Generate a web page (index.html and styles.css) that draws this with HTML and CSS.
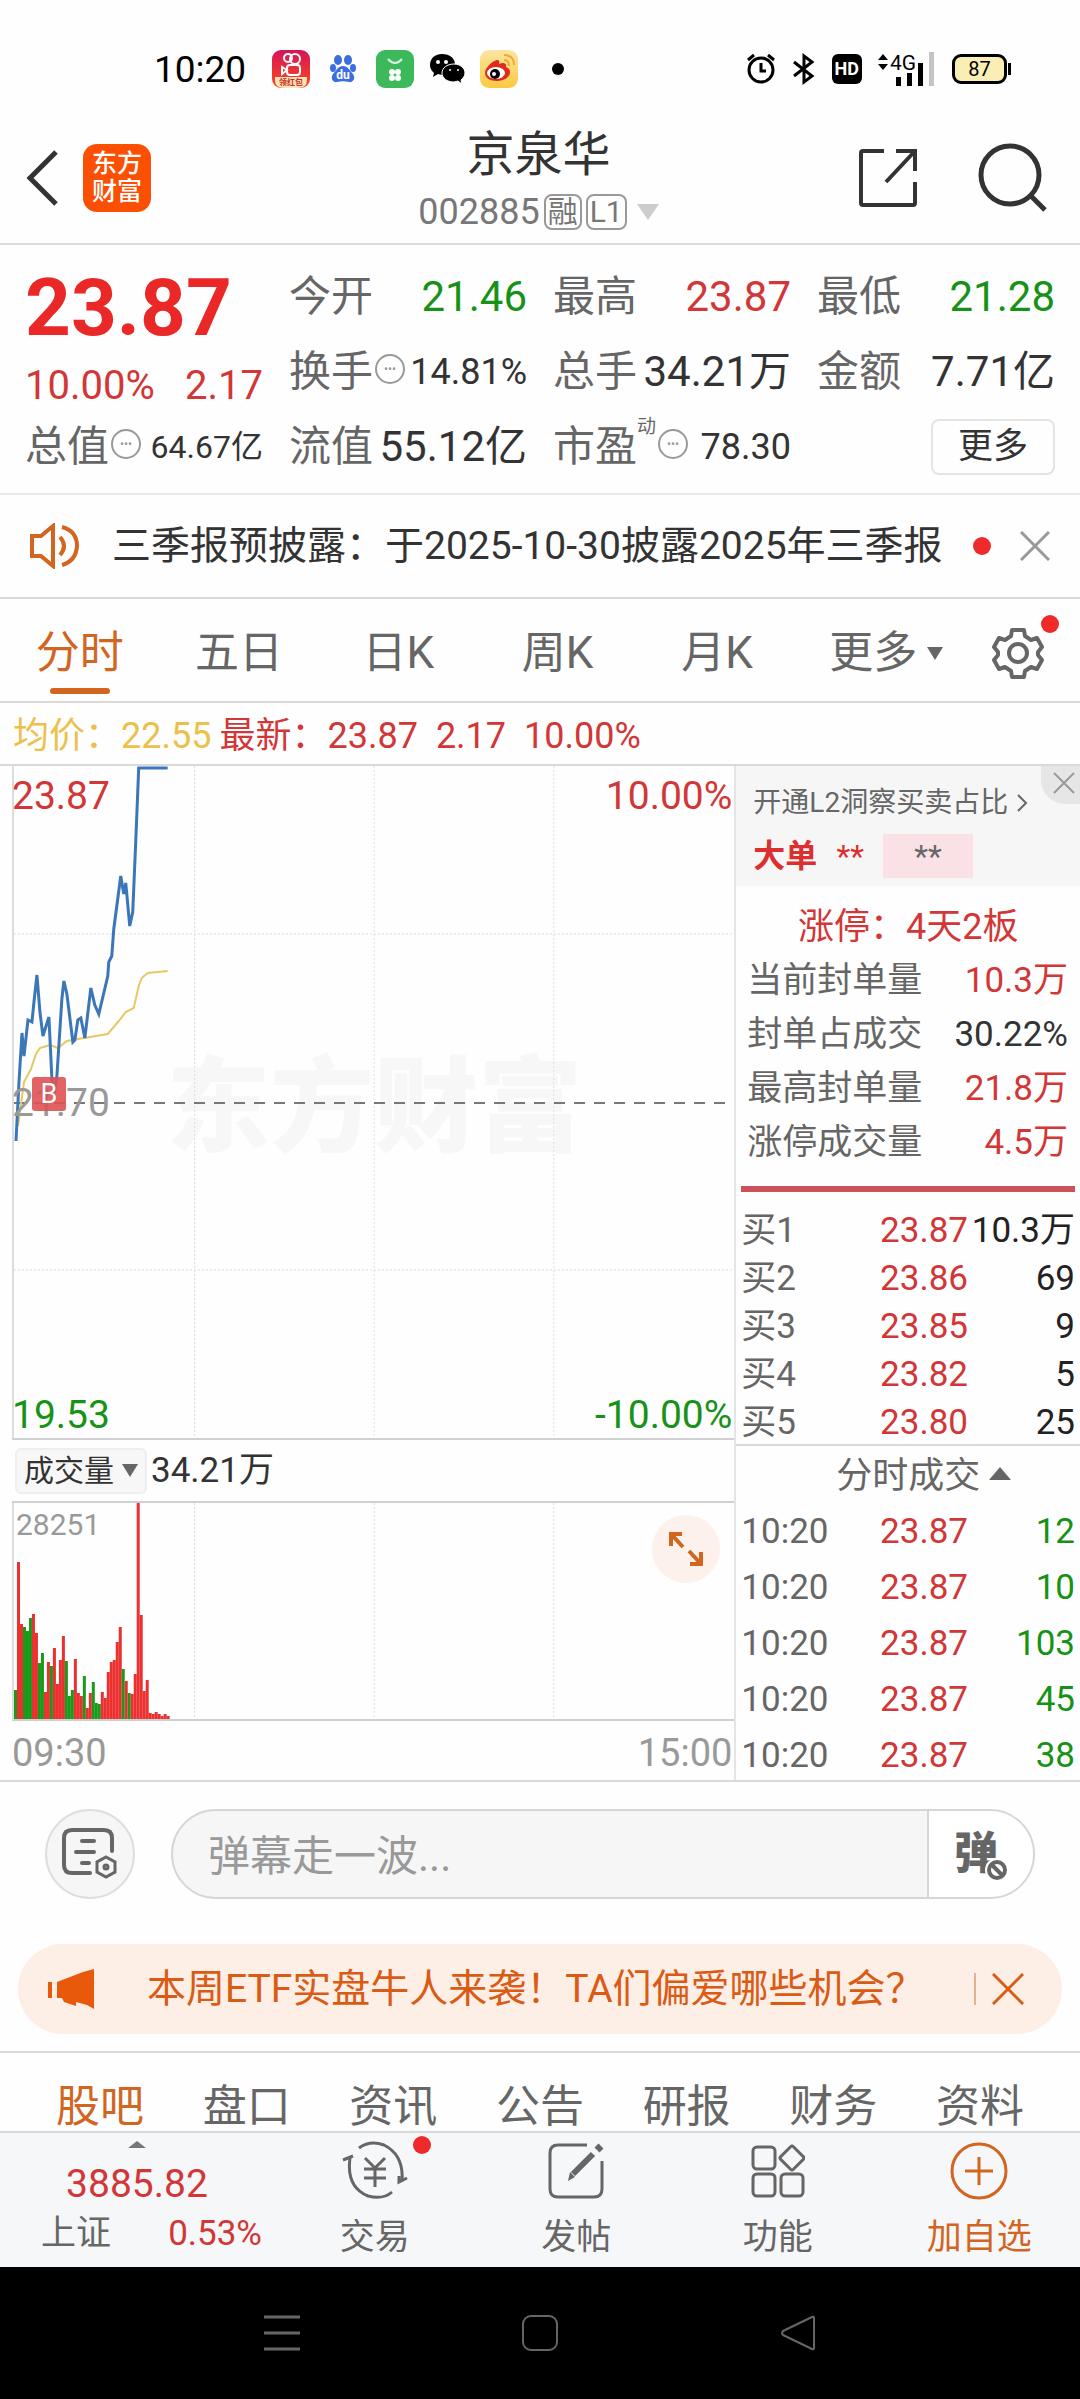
FILE: index.html
```html
<!DOCTYPE html>
<html lang="zh-CN">
<head>
    <meta charset="UTF-8">
    <meta name="viewport" content="width=device-width, initial-scale=1.0">
    <title>京泉华 002885</title>
    <link rel="stylesheet" href="styles.css">
</head>
<body>

    <div class="status-bar">
        <span class="clock">10:20</span>
        <div class="app-icons">
            <svg width="38" height="38" viewBox="0 0 38 38">
                <defs>
                    <linearGradient id="ks" x1="0" y1="0" x2="0" y2="1"><stop offset="0" stop-color="#d3145a"/><stop offset="1" stop-color="#ff4a1c"/></linearGradient>
                    <linearGradient id="wb" x1="0" y1="0" x2="0" y2="1"><stop offset="0" stop-color="#fbe6a0"/><stop offset="1" stop-color="#fbc93f"/></linearGradient>
                </defs>
                <rect width="38" height="38" rx="9" fill="url(#ks)"/>
                <path d="M3 27h32v3q0 8-9 8H12q-9 0-9-8z" fill="#fde3b8"/>
                <g fill="none" stroke="#fff" stroke-width="2"><circle cx="16" cy="8" r="4"/><circle cx="23" cy="9" r="5"/><rect x="15" y="15" width="13" height="10" rx="3"/><path d="M15 20l-5-3v7z"/></g>
                <text x="19" y="35" font-size="8" text-anchor="middle" fill="#c8321e" font-weight="700">领红包</text>
            </svg>
            <svg width="38" height="38" viewBox="0 0 38 38" fill="#3b6fe0">
                <ellipse cx="14" cy="10" rx="4" ry="5"/><ellipse cx="24" cy="10" rx="4" ry="5"/><ellipse cx="9" cy="18" rx="3" ry="4"/><ellipse cx="29" cy="18" rx="3" ry="4"/>
                <path d="M19 16c5 0 6 4 10 8 3 4 0 9-4 8-4-1-8-1-12 0-4 1-7-4-4-8 4-4 5-8 10-8z"/>
                <text x="19" y="29" font-size="12" text-anchor="middle" fill="#fff" font-weight="700">du</text>
            </svg>
            <svg width="38" height="38" viewBox="0 0 38 38">
                <rect width="38" height="38" rx="9" fill="#3cba5b"/>
                <path d="M12 9q7 8 14 0" fill="none" stroke="#d9f5df" stroke-width="2"/>
                <g fill="#fff"><circle cx="16" cy="22" r="3"/><circle cx="22" cy="22" r="3"/><circle cx="16" cy="28" r="3"/><circle cx="22" cy="28" r="3"/></g>
            </svg>
            <svg width="38" height="38" viewBox="0 0 38 38">
                <path d="M14 4C6 4 2 9 2 15c0 4 2 6 4 8l-1 4 5-3c10 3 17-2 17-9S22 4 14 4z"/>
                <path d="M26 14c-7 0-12 4-12 9s5 9 12 9l4-1 4 3-1-4c2-2 4-4 4-7 0-5-5-9-11-9z" stroke="#fff" stroke-width="1"/>
                <g fill="#fff"><circle cx="10" cy="12" r="2"/><circle cx="18" cy="12" r="2"/><circle cx="22" cy="20" r="1"/><circle cx="30" cy="20" r="1"/></g>
            </svg>
            <svg width="38" height="38" viewBox="0 0 38 38">
                <rect width="38" height="38" rx="9" fill="url(#wb)"/>
                <path d="M5 23c0-5 7-12 12-13 2 0 3 1 2 4 4-2 8-1 7 3 3 1 4 3 4 5 0 5-6 9-13 9S5 28 5 23z" fill="#df2b1e"/>
                <ellipse cx="16" cy="23" rx="9" ry="6" fill="#fff"/><circle cx="15" cy="24" r="5"/><circle cx="14" cy="24" r="2" fill="#fff"/>
                <path d="M24 10q5 0 5 6M24 5q10 0 10 10" fill="none" stroke="#f0a83a" stroke-width="2"/>
            </svg>
            <span class="more-dot"></span>
        </div>
        <div class="sys-icons">
            <svg width="30" height="34" viewBox="0 0 30 34" fill="none" stroke="#000" stroke-width="3"><circle cx="15" cy="18" r="12"/><path d="M15 11v8h5M2 8l6-5M28 8l-6-5"/></svg>
            <svg width="24" height="34" viewBox="0 0 24 34" fill="none" stroke="#000" stroke-width="3"><path d="M2 10l18 14-8 6V4l8 6L2 24"/></svg>
            <span class="hd">HD</span>
            <svg width="58" height="38" viewBox="0 0 58 38"><path d="M5 4l5 6H0zM5 20l5-6H0z"/><text x="12" y="20" font-size="21">4G</text><path d="M18 27h5v9h-5zM29 23h5v13h-5zM40 13h5v23h-5z"/><path d="M51 2h5v34h-5z" fill="#c4c4c4"/></svg>
            <span class="battery">87</span>
        </div>
    </div>

    <header class="header">
        <div class="header-side">
            <button class="icon-button" aria-label="返回">
                <svg width="36" height="56" viewBox="0 0 36 56" fill="none" stroke="#333" stroke-width="5"><path d="M32 2L6 28l26 26"/></svg>
            </button>
            <div class="logo">东方<br>财富</div>
        </div>
        <div class="header-title">
            <h1>京泉华</h1>
            <div class="code">002885<span class="tag">融</span><span class="tag">L1</span><i class="down"></i></div>
        </div>
        <div class="header-side right">
            <button class="icon-button" aria-label="分享">
                <svg width="60" height="60" viewBox="0 0 60 60" fill="none" stroke="#333" stroke-width="4"><path d="M26 3H5q-2 0-2 2v50q0 2 2 2h50q2 0 2-2V34M38 3h19v20M57 3L28 34"/></svg>
            </button>
            <button class="icon-button" aria-label="搜索">
                <svg width="70" height="70" viewBox="0 0 70 70" fill="none" stroke="#333" stroke-width="5"><circle cx="32" cy="32" r="29"/><path d="M53 53l14 14"/></svg>
            </button>
        </div>
    </header>

    <section class="quote">
        <div class="price">
            <strong>23.87</strong>
            <div class="change"><span>10.00%</span><span>2.17</span></div>
        </div>
        <div class="cell"><span>今开</span><b class="green">21.46</b></div>
        <div class="cell"><span>最高</span><b class="red">23.87</b></div>
        <div class="cell"><span>最低</span><b class="green">21.28</b></div>
        <div class="cell"><span>换手</span><i class="info">•••</i><b class="medium">14.81%</b></div>
        <div class="cell"><span>总手</span><b>34.21万</b></div>
        <div class="cell"><span>金额</span><b>7.71亿</b></div>
        <div class="cell"><span>总值</span><i class="info">•••</i><b class="small">64.67亿</b></div>
        <div class="cell"><span>流值</span><b>55.12亿</b></div>
        <div class="cell"><span>市盈</span><sup>动</sup><i class="info">•••</i><b class="medium">78.30</b></div>
        <div class="cell"><button class="more-button">更多</button></div>
    </section>

    <section class="notice">
        <svg width="54" height="46" viewBox="0 0 54 46" fill="none" stroke="#d2651f" stroke-width="4"><path d="M4 13h9L25 3v40L13 33H4zM32 14q8 9 0 18M34 4q15 4 15 19-1 15-15 19"/></svg>
        <p>三季报预披露：于2025-10-30披露2025年三季报</p>
        <span class="red-dot"></span>
        <button class="icon-button" aria-label="关闭">
            <svg width="30" height="30" viewBox="0 0 30 30" fill="none" stroke="#999" stroke-width="3"><path d="M1 1l28 28M29 1L1 29"/></svg>
        </button>
    </section>

    <nav class="periods">
        <button class="active">分时</button>
        <button>五日</button>
        <button>日K</button>
        <button>周K</button>
        <button>月K</button>
        <button>更多<i class="down"></i></button>
        <button class="settings" aria-label="设置">
            <svg width="52" height="52" viewBox="0 0 52 52" fill="none" stroke="#666" stroke-width="4" stroke-linejoin="round"><path d="M20 3h12l1 6 6 4 6-2 5 9-4 5v3l4 5-5 9-6-2-6 4-1 6H20l-1-6-6-4-6 2-5-9 4-5v-3l-4-5 5-9 6 2 6-4z"/><circle cx="26" cy="26" r="9"/></svg>
            <span class="red-dot"></span>
        </button>
    </nav>

    <div class="average"><span class="yellow">均价：22.55</span><span>最新：23.87</span><span>2.17</span><span>10.00%</span></div>

    <main class="market">
        <div class="charts">
            <div class="chart price-chart">
                <div class="watermark">东方财富</div>
                <svg class="plot" viewBox="0 0 722 672" preserveAspectRatio="none">
                    <path class="grid" d="M181 0v672M361 0v672M541 0v672M0 168h722M0 504h722"/>
                    <path class="middle" d="M0 337h722"/>
                    <path class="avg-line" d="M4 360L10 316 17 303 22 288 26 282 36 279 44 282 53 275 70 272 94 268 105 255 112 246 120 242 125 220 128 212 134 207 154 205"/>
                    <path class="price-line" d="M2 375L5 316 8 267 10 290 14 254 18 256 20 236 23 209 26 246 29 270 35 251 38 313 40 330 43 310 48 233 50 215 53 228 59 276 61 274 64 254 67 252 71 272 77 222 81 239 85 248 94 210 95 196 98 190 100 163 107 110 110 128 112 117 116 160 119 146 122 76 125 2 154 2"/>
                </svg>
                <span class="axis top red">23.87</span>
                <span class="axis top end red">10.00%</span>
                <span class="axis mid">21.70</span>
                <span class="axis bottom green">19.53</span>
                <span class="axis bottom end green">-10.00%</span>
                <span class="buy-mark">B</span>
            </div>
            <div class="volume-head">
                <div class="picker">
                    <select aria-label="指标"><option>成交量</option></select>
                    <i class="down"></i>
                </div>
                <span>34.21万</span>
            </div>
            <div class="chart volume-chart">
                <svg class="plot" viewBox="0 0 722 216" preserveAspectRatio="none">
                    <path class="grid" d="M181 0v216M361 0v216M541 0v216"/>
                    <g id="bars"></g>
                </svg>
                <span class="volume-max">28251</span>
                <button class="expand" aria-label="全屏">
                    <svg width="36" height="36" viewBox="0 0 36 36" fill="none" stroke="#d2651f" stroke-width="4"><path d="M3 15V3h11M3 3l12 13M33 21v12H22M33 33L21 20"/></svg>
                </button>
            </div>
            <div class="times"><span>09:30</span><span>15:00</span></div>
        </div>

        <aside class="depth">
            <div class="level2">
                <a href="#">开通L2洞察买卖占比<svg width="12" height="20" viewBox="0 0 12 20" fill="none" stroke="#666" stroke-width="2"><path d="M2 2l8 8-8 8"/></svg></a>
                <div class="big-order"><b>大单</b><span>**</span><em>**</em></div>
                <button class="close-tab" aria-label="关闭">
                    <svg width="22" height="22" viewBox="0 0 22 22" fill="none" stroke="#999" stroke-width="2"><path d="M1 1l20 20M21 1L1 21"/></svg>
                </button>
            </div>
            <div class="limit-title">涨停：4天2板</div>
            <dl class="limit">
                <div><dt>当前封单量</dt><dd class="red">10.3万</dd></div>
                <div><dt>封单占成交</dt><dd>30.22%</dd></div>
                <div><dt>最高封单量</dt><dd class="red">21.8万</dd></div>
                <div><dt>涨停成交量</dt><dd class="red">4.5万</dd></div>
            </dl>
            <table class="orders">
                <tr><th>买1</th><td>23.87</td><td>10.3万</td></tr>
                <tr><th>买2</th><td>23.86</td><td>69</td></tr>
                <tr><th>买3</th><td>23.85</td><td>9</td></tr>
                <tr><th>买4</th><td>23.82</td><td>5</td></tr>
                <tr><th>买5</th><td>23.80</td><td>25</td></tr>
            </table>
            <button class="deals-title">分时成交<i class="up"></i></button>
            <table class="orders deals">
                <tr><th>10:20</th><td>23.87</td><td>12</td></tr>
                <tr><th>10:20</th><td>23.87</td><td>10</td></tr>
                <tr><th>10:20</th><td>23.87</td><td>103</td></tr>
                <tr><th>10:20</th><td>23.87</td><td>45</td></tr>
                <tr><th>10:20</th><td>23.87</td><td>38</td></tr>
            </table>
        </aside>
    </main>

    <section class="barrage">
        <button class="round" aria-label="弹幕设置">
            <svg width="56" height="52" viewBox="0 0 56 52" fill="none" stroke="#666" stroke-width="4" stroke-linecap="round"><path d="M28 45H10q-8 0-8-8V10q0-8 8-8h32q8 0 8 8v13M20 13h12M14 24h18M20 35h7"/><path d="M44 29l9 5v10l-9 5-9-5V34z" stroke-width="3"/><circle cx="44" cy="39" r="2" stroke-width="3"/></svg>
        </button>
        <div class="barrage-box">
            <input type="text" aria-label="弹幕" placeholder="弹幕走一波...">
            <button aria-label="关闭弹幕">弹<svg width="24" height="24" viewBox="0 0 24 24" fill="#fff"><circle cx="12" cy="12" r="12"/><circle cx="12" cy="12" r="8" stroke="#666" stroke-width="4"/><path d="M7 7l10 10" stroke="#666" stroke-width="4"/></svg></button>
        </div>
    </section>

    <section class="banner">
        <svg width="46" height="40" viewBox="0 0 46 40" fill="#e8590c"><path d="M0 13h4v16H0zM9 13L35 3 46 0v40l-7-4-11-3v4l-12-4-2-4H9z"/></svg>
        <a href="#">本周ETF实盘牛人来袭！TA们偏爱哪些机会？</a>
        <button class="icon-button" aria-label="关闭">
            <svg width="32" height="32" viewBox="0 0 32 32" fill="none" stroke="#d95b14" stroke-width="3"><path d="M1 1l30 30M31 1L1 31"/></svg>
        </button>
    </section>

    <nav class="sections">
        <a class="active" href="#">股吧</a>
        <a href="#">盘口</a>
        <a href="#">资讯</a>
        <a href="#">公告</a>
        <a href="#">研报</a>
        <a href="#">财务</a>
        <a href="#">资料</a>
    </nav>

    <footer class="toolbar">
        <div class="index">
            <i class="up"></i>
            <span class="red">3885.82</span>
            <div><span>上证</span><span class="red">0.53%</span></div>
        </div>
        <button>
            <svg width="66" height="60" viewBox="0 0 66 60" fill="none" stroke="#666" stroke-width="3"><path d="M17 7q11-8 25-3 20 10 18 36M50 51q-9 8-24 4Q4 46 8 17M1 19l10-4M65 37l-8 4V35M23 17l10 10 10-10M22 28h22M22 37h22M33 27v19"/></svg>
            <span>交易</span>
            <span class="red-dot"></span>
        </button>
        <button>
            <svg width="56" height="60" viewBox="0 -2 56 60" fill="none" stroke="#666" stroke-width="3"><path d="M39 2H10q-8 0-8 8v36q0 8 8 8h36q8 0 8-8V18"/><path d="M45 11L25 31" stroke-width="6"/><path d="M22 29l5 5-7 4z" fill="#666" stroke="none"/><path d="M49 7l4-4" stroke-width="7"/></svg>
            <span>发帖</span>
        </button>
        <button>
            <svg width="54" height="60" viewBox="0 -3 54 60" fill="none" stroke="#666" stroke-width="3"><rect x="2" y="3" width="22" height="22" rx="4"/><rect x="2" y="30" width="22" height="22" rx="4"/><rect x="30" y="30" width="22" height="22" rx="4"/><rect x="32" y="5" width="18" height="18" rx="2" transform="rotate(45 41 14)"/></svg>
            <span>功能</span>
        </button>
        <button class="active">
            <svg width="58" height="60" viewBox="0 -1 58 60" fill="none" stroke="#d2651f" stroke-width="3"><circle cx="29" cy="29" r="27"/><path d="M29 15v28M15 29h28"/></svg>
            <span>加自选</span>
        </button>
    </footer>

    <div class="system-nav">
        <svg width="36" height="36" viewBox="0 0 36 36" fill="none" stroke="#666" stroke-width="3"><path d="M0 2h36M0 18h36M0 34h36"/></svg>
        <svg width="36" height="36" viewBox="0 0 36 36" fill="none" stroke="#666" stroke-width="2"><rect x="1" y="1" width="34" height="34" rx="8"/></svg>
        <svg width="36" height="36" viewBox="0 0 36 36" fill="none" stroke="#666" stroke-width="2" stroke-linejoin="round"><path d="M34 3v30q0 2-2 1L3 20q-2-2 0-4L32 2q2-1 2 1z"/></svg>
    </div>

    <script>
        // one bar per minute, negative = falling minute
        const volumes = [-29, 157, 95, -92, -88, -101, 105, 86, -56, -66, 27, 57, -53, 71, 35, 59, 83, -58,
            -23, -29, 60, 26, 23, -43, 11, 26, -37, -16, -15, 27, 21, 47, 57, 59, 77, 92, -50, 38, -26, 25,
            45, 216, 104, 28, 39, 6, 5, 7, 5, 3, 5, 3];

        document.getElementById('bars').innerHTML = volumes.map((v, i) =>
            `<rect x="${i * 3}" y="${216 - Math.abs(v)}" width="3" height="${Math.abs(v)}" fill="${v < 0 ? '#1a9a1a' : '#ec2f2f'}"/>`
        ).join('');
    </script>

</body>
</html>
```

FILE: styles.css
```css
* {
    margin: 0;
    padding: 0;
    box-sizing: border-box;
}

body {
    background: #fefefe;
    color: #333;
    font-family: Roboto, "Noto Sans CJK SC", sans-serif;
    font-size: 35px;
}

button, input, select {
    font: inherit;
    color: inherit;
    background: none;
    border: none;
}

a {
    color: inherit;
    text-decoration: none;
}

svg {
    display: block;
    flex: none;
}

i, em {
    font-style: normal;
}

.red { color: #d23636; }
.green { color: #169216; }
.yellow { color: #ebc04b; }

.down, .up {
    display: inline-block;
    border: 8px solid transparent;
}

.down {
    border-top: 13px solid #666;
    border-bottom: none;
}

.up {
    border-width: 11px;
    border-bottom: 13px solid #666;
    border-top: none;
}

.red-dot {
    width: 18px;
    height: 18px;
    border-radius: 50%;
    background: #ee2a2a;
}

.icon-button {
    display: flex;
}

/* status bar */
.status-bar {
    display: flex;
    align-items: center;
    height: 138px;
    padding: 0 73px 0 154px;
    color: #000;
}

.clock {
    font-size: 37px;
}

.app-icons {
    display: flex;
    align-items: center;
    gap: 14px;
    margin-left: 26px;
}

.more-dot {
    width: 12px;
    height: 12px;
    margin-left: 20px;
    border-radius: 50%;
    background: #000;
}

.sys-icons {
    display: flex;
    align-items: center;
    gap: 16px;
    margin-left: auto;
}

.hd {
    padding: 0 3px;
    border-radius: 6px;
    background: #000;
    color: #fff;
    font-size: 18px;
    font-weight: 700;
    line-height: 30px;
}

.battery {
    position: relative;
    width: 55px;
    border: 3px solid #000;
    border-radius: 9px;
    background: #fbeeb5;
    font-size: 20px;
    line-height: 24px;
    text-align: center;
}

.battery::after {
    content: "";
    position: absolute;
    top: 6px;
    right: -7px;
    width: 3px;
    height: 12px;
    background: #000;
}

/* header */
.header {
    display: flex;
    justify-content: space-between;
    height: 107px;
    padding: 0 32px 0 24px;
    border-bottom: 2px solid #dcdcdc;
}

.header-side {
    display: flex;
    align-items: center;
    gap: 23px;
    width: 195px;
    height: 80px;
}

.header-side.right {
    justify-content: flex-end;
    gap: 60px;
    width: 190px;
}

.logo {
    width: 68px;
    padding: 6px 0;
    border-radius: 14px;
    background: #fb4f04;
    color: #fff;
    font-size: 25px;
    font-weight: 500;
    line-height: 28px;
    text-align: center;
}

.header-title {
    text-align: center;
}

.header-title h1 {
    font-size: 48px;
    font-weight: 400;
    line-height: 34px;
}

.code {
    display: flex;
    align-items: center;
    gap: 4px;
    height: 80px;
    color: #777;
    font-size: 36px;
}

.tag {
    padding: 0 2px;
    border: 2px solid #999;
    border-radius: 8px;
    font-size: 30px;
    line-height: 32px;
}

.code .down {
    margin-left: 6px;
    border-width: 11px;
    border-top: 16px solid #ccc;
    border-bottom: none;
}

/* quote */
.quote {
    display: grid;
    grid-template-columns: repeat(4, 1fr);
    grid-auto-rows: 75px;
    column-gap: 26px;
    padding: 14px 25px 9px;
    border-bottom: 2px solid #e9e9e9;
}

.price {
    grid-row: span 2;
    color: #ea2828;
}

.price strong {
    display: block;
    font-size: 80px;
    font-weight: 700;
    line-height: 98px;
}

.change {
    display: flex;
    justify-content: space-between;
    color: #d23636;
    font-size: 40px;
    line-height: 58px;
}

.cell {
    display: flex;
    align-items: center;
    font-size: 42px;
    line-height: 76px;
    white-space: nowrap;
}

.cell span, .cell sup {
    color: #666;
}

.cell b {
    margin-left: auto;
    font-weight: 400;
}

.cell .medium { font-size: 36px; }
.cell .small { font-size: 32px; }

.cell sup {
    align-self: flex-start;
    font-size: 19px;
    line-height: 36px;
}

.info {
    width: 30px;
    margin: 0 0 6px 2px;
    border: 2px solid #999;
    border-radius: 50%;
    color: #999;
    font-size: 12px;
    line-height: 26px;
    text-align: center;
}

.more-button {
    margin-left: auto;
    padding: 0 25px;
    border: 2px solid #e4e4e4;
    border-radius: 8px;
    font-size: 35px;
    line-height: 52px;
}

/* notice */
.notice {
    display: flex;
    align-items: center;
    height: 104px;
    padding: 0 30px 0 28px;
    border-bottom: 2px solid #d9d9d9;
}

.notice p {
    flex: 1;
    margin-left: 30px;
    font-size: 39px;
    line-height: 60px;
    white-space: nowrap;
}

.notice .red-dot {
    margin-right: 29px;
}

/* chart periods */
.periods {
    display: flex;
    align-items: center;
    height: 104px;
    padding-top: 6px;
    border-bottom: 2px solid #d9d9d9;
    color: #666;
    font-size: 44px;
}

.periods button {
    position: relative;
    flex: 1;
    line-height: 80px;
}

.periods .active {
    color: #d2651f;
}

.periods .active::after {
    content: "";
    position: absolute;
    left: calc(50% - 30px);
    bottom: -1px;
    width: 60px;
    height: 6px;
    border-radius: 3px;
    background: #d2651f;
}

.periods .down {
    margin: 0 -20px 8px 10px;
}

.periods .settings {
    flex: 0 0 124px;
}

.settings svg {
    margin: 0 auto;
}

.settings .red-dot {
    position: absolute;
    top: -12px;
    right: 21px;
}

.average {
    display: flex;
    gap: 18px;
    height: 63px;
    padding: 0 13px;
    border-bottom: 2px solid #d9d9d9;
    color: #d23636;
    font-size: 36px;
    line-height: 66px;
}

.average .yellow {
    margin-right: -10px;
}

/* charts */
.market {
    display: grid;
    grid-template-columns: 15fr 7fr;
    border-bottom: 2px solid #d9d9d9;
}

.charts {
    padding-left: 12px;
    border-right: 2px solid #e4e4e4;
}

.chart {
    position: relative;
    border-left: 2px solid #dcdcdc;
    border-bottom: 2px solid #d0d0d0;
}

.plot {
    position: relative;
    width: 100%;
}

.price-chart .plot { height: 672px; }
.volume-chart .plot { height: 216px; }

.plot path {
    fill: none;
    vector-effect: non-scaling-stroke;
}

.grid {
    stroke: #dedede;
    stroke-dasharray: 2 2;
}

.middle {
    stroke: #777;
    stroke-width: 2;
    stroke-dasharray: 11 9;
}

.avg-line {
    stroke: #e8c765;
    stroke-width: 2;
}

.price-line {
    stroke: #3a76b8;
    stroke-width: 3;
}

.watermark {
    position: absolute;
    inset: 0;
    display: flex;
    align-items: center;
    justify-content: center;
    padding-top: 14px;
    color: #f7f7f7;
    font-size: 104px;
    font-weight: 900;
    line-height: 104px;
}

.axis {
    position: absolute;
    left: -2px;
    font-size: 39px;
    line-height: 58px;
}

.axis.top { top: 1px; }
.axis.bottom { bottom: -6px; }
.axis.end { left: auto; right: 2px; }

.axis.mid {
    top: 50%;
    margin-top: -28px;
    color: #999;
}

.buy-mark {
    position: absolute;
    left: 18px;
    top: 311px;
    width: 34px;
    border-radius: 3px;
    background: rgba(222, 82, 82, 0.9);
    color: #fff;
    font-size: 27px;
    line-height: 34px;
    text-align: center;
}

.volume-head {
    display: flex;
    align-items: center;
    height: 63px;
    border-bottom: 2px solid #d0d0d0;
    line-height: 60px;
}

.picker {
    position: relative;
    margin: 0 4px 0 3px;
}

.picker select {
    display: block;
    width: 132px;
    padding-left: 7px;
    border: 2px solid #eee;
    border-radius: 6px;
    background: #f7f7f7;
    appearance: none;
    font-size: 30px;
    line-height: 42px;
}

.picker .down {
    position: absolute;
    right: 9px;
    top: 16px;
}

.volume-max {
    position: absolute;
    left: 2px;
    top: 4px;
    color: #999;
    font-size: 30px;
}

.expand {
    position: absolute;
    right: 14px;
    top: 12px;
    display: flex;
    align-items: center;
    justify-content: center;
    width: 68px;
    height: 68px;
    border-radius: 50%;
    background: #fcf1eb;
}

.times {
    display: flex;
    justify-content: space-between;
    padding: 5px 2px 0 0;
    color: #999;
    font-size: 38px;
    line-height: 54px;
}

/* right column */
.level2 {
    position: relative;
    height: 120px;
    padding: 15px 17px 0;
    background: #f6f6f7;
}

.level2 a {
    display: flex;
    align-items: center;
    gap: 8px;
    color: #666;
    font-size: 28px;
    line-height: 44px;
}

.big-order {
    display: flex;
    align-items: center;
    gap: 19px;
    margin-top: 9px;
    color: #dc2f2f;
    font-size: 32px;
    line-height: 44px;
}

.big-order em {
    width: 90px;
    background: #f9e1e5;
    color: #666;
    text-align: center;
}

.close-tab {
    position: absolute;
    top: 0;
    right: 0;
    padding: 6px 5px 10px 12px;
    border-bottom-left-radius: 24px;
    background: #e6e6e7;
}

.limit-title {
    padding-top: 14px;
    color: #d23636;
    font-size: 36px;
    line-height: 54px;
    text-align: center;
}

.limit {
    margin: 0 5px;
    padding: 0 7px 16px 6px;
    border-bottom: 6px solid #cc5258;
    line-height: 54px;
}

.limit div {
    display: flex;
    justify-content: space-between;
}

.limit dt {
    color: #666;
}

.orders {
    width: 100%;
    margin-top: 12px;
    padding: 0 5px;
    border-collapse: separate;
    border-spacing: 0;
    table-layout: fixed;
    line-height: 42px;
}

.orders th, .orders td {
    padding-top: 6px;
}

.orders th {
    width: 98px;
    color: #666;
    font-weight: 400;
    text-align: left;
}

.orders td {
    text-align: right;
    color: #d23636;
    white-space: nowrap;
}

.orders td:last-child {
    width: 107px;
    color: #222;
}

.deals-title {
    display: block;
    width: 100%;
    padding: 6px 0 0 31px;
    border-top: 2px solid #d9d9d9;
    color: #666;
    font-size: 36px;
    line-height: 48px;
}

.deals-title .up {
    margin: 0 0 8px 9px;
}

.deals {
    margin-top: 0;
    line-height: 48px;
}

.deals th, .deals td {
    padding-top: 8px;
}

.deals td:last-child {
    color: #169216;
}

/* barrage */
.barrage {
    display: flex;
    gap: 36px;
    padding: 27px 45px 45px;
}

.round {
    display: flex;
    align-items: center;
    justify-content: center;
    width: 90px;
    height: 90px;
    border: 2px solid #dedede;
    border-radius: 50%;
    background: #f6f6f7;
}

.barrage-box {
    display: flex;
    flex: 1;
    height: 90px;
    border: 2px solid #d6d6d6;
    border-radius: 45px;
    background: #f6f6f7;
    overflow: hidden;
}

.barrage-box input {
    flex: 1;
    min-width: 0;
    padding: 4px 0 0 35px;
    font-size: 42px;
}

.barrage-box input::placeholder {
    color: #999;
}

.barrage-box button {
    position: relative;
    width: 106px;
    padding-right: 10px;
    border-left: 2px solid #d6d6d6;
    background: #fff;
    color: #666;
    font-size: 44px;
    font-weight: 900;
    line-height: 80px;
}

.barrage-box button svg {
    position: absolute;
    right: 24px;
    bottom: 15px;
}

/* banner */
.banner {
    display: flex;
    align-items: center;
    height: 90px;
    margin: 0 18px 17px;
    padding: 0 38px 0 30px;
    border-radius: 45px;
    background: #fdeee6;
    color: #d95b14;
}

.banner a {
    flex: 1;
    margin-left: 53px;
    font-size: 39px;
    line-height: 86px;
    white-space: nowrap;
}

.banner button {
    padding-left: 16px;
    border-left: 2px solid #e4b196;
}

/* lower tabs */
.sections {
    display: flex;
    justify-content: space-between;
    height: 80px;
    padding: 30px 56px 0;
    border-top: 2px solid #d9d9d9;
    color: #666;
    font-size: 44px;
    line-height: 48px;
}

.sections .active {
    color: #d2651f;
}

.toolbar {
    display: flex;
    height: 136px;
    border-top: 2px solid #d9d9d9;
    background: #f6f7f9;
    color: #666;
}

.toolbar button {
    position: relative;
    display: flex;
    flex: 1;
    flex-direction: column;
    align-items: center;
    gap: 12px;
    padding-top: 8px;
    line-height: 50px;
}

.toolbar .active {
    color: #d2651f;
}

.toolbar .red-dot {
    position: absolute;
    left: 69%;
    top: 3px;
}

.index {
    display: flex;
    flex: 0 0 274px;
    flex-direction: column;
    align-items: center;
    padding-top: 8px;
    font-size: 39px;
    line-height: 50px;
}

.index .up {
    margin-bottom: 11px;
    border-width: 9px;
    border-bottom: 7px solid #777;
    border-top: none;
}

.index div {
    display: flex;
    justify-content: space-between;
    align-self: stretch;
    padding: 0 12px 0 41px;
    font-size: 35px;
}

.system-nav {
    display: flex;
    align-items: center;
    justify-content: center;
    gap: 222px;
    height: 132px;
    background: #000;
}
```
